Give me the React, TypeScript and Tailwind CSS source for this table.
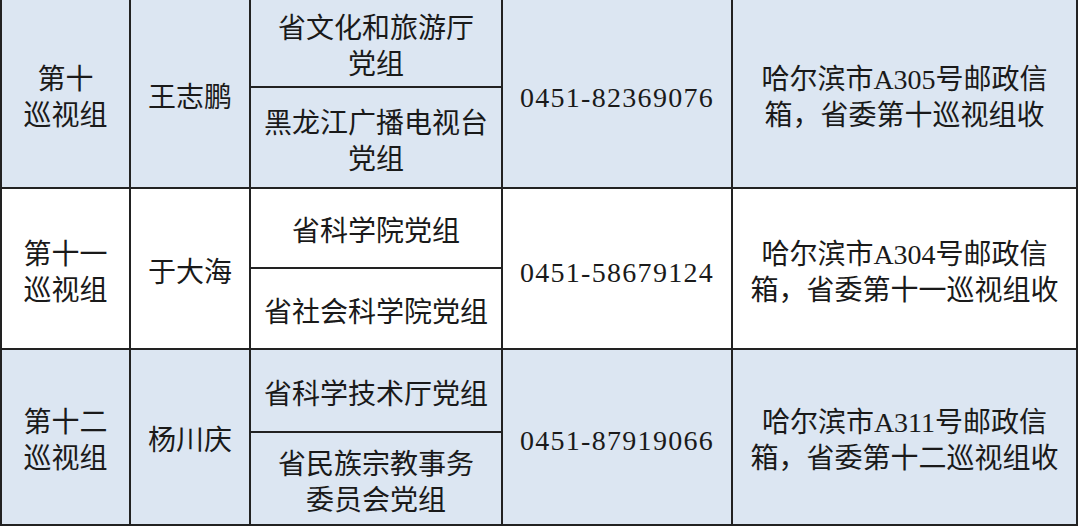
const rows = [
  {
    group: ["第十", "巡视组"],
    leader: "王志鹏",
    units: [["省文化和旅游厅", "党组"], ["黑龙江广播电视台", "党组"]],
    phone: "0451-82369076",
    address: ["哈尔滨市A305号邮政信", "箱，省委第十巡视组收"],
    blue: true,
  },
  {
    group: ["第十一", "巡视组"],
    leader: "于大海",
    units: [["省科学院党组"], ["省社会科学院党组"]],
    phone: "0451-58679124",
    address: ["哈尔滨市A304号邮政信", "箱，省委第十一巡视组收"],
    blue: false,
  },
  {
    group: ["第十二", "巡视组"],
    leader: "杨川庆",
    units: [["省科学技术厅党组"], ["省民族宗教事务", "委员会党组"]],
    phone: "0451-87919066",
    address: ["哈尔滨市A311号邮政信", "箱，省委第十二巡视组收"],
    blue: true,
  },
];

const Lines = ({ lines }: { lines: string[] }) => (
  <span>
    {lines.map((l, i) => (
      <span key={i} className="block">
        {l}
      </span>
    ))}
  </span>
);

export default function App() {
  return (
    <div className="w-[1080px] h-[528px] bg-white overflow-hidden">
      <div
        className="inline-grid grid-cols-[127px_118px_250px_228px_343px] grid-rows-[86px_99px_78px_79px_81px_91px] gap-[2px] px-[2px] pb-[2px] bg-[#222] text-[28px] leading-[36px] text-[#1a1a1a]"
        style={{ fontFamily: '"Liberation Serif", "Noto Sans CJK SC", serif' }}
      >
        {rows.map((r, i) => {
          const bg = r.blue ? "bg-[#dce6f2]" : "bg-white";
          const cell = `${bg} flex items-center justify-center text-center pt-2`;
          return [
            <div key={`${i}g`} className={`${cell} row-span-2`}>
              <Lines lines={r.group} />
            </div>,
            <div key={`${i}l`} className={`${cell} row-span-2`}>
              {r.leader}
            </div>,
            <div key={`${i}u0`} className={cell}>
              <Lines lines={r.units[0]} />
            </div>,
            <div key={`${i}p`} className={`${cell} row-span-2 tracking-[1.3px]`}>
              {r.phone}
            </div>,
            <div key={`${i}a`} className={`${cell} row-span-2`}>
              <Lines lines={r.address} />
            </div>,
            <div key={`${i}u1`} className={cell}>
              <Lines lines={r.units[1]} />
            </div>,
          ];
        })}
      </div>
    </div>
  );
}
